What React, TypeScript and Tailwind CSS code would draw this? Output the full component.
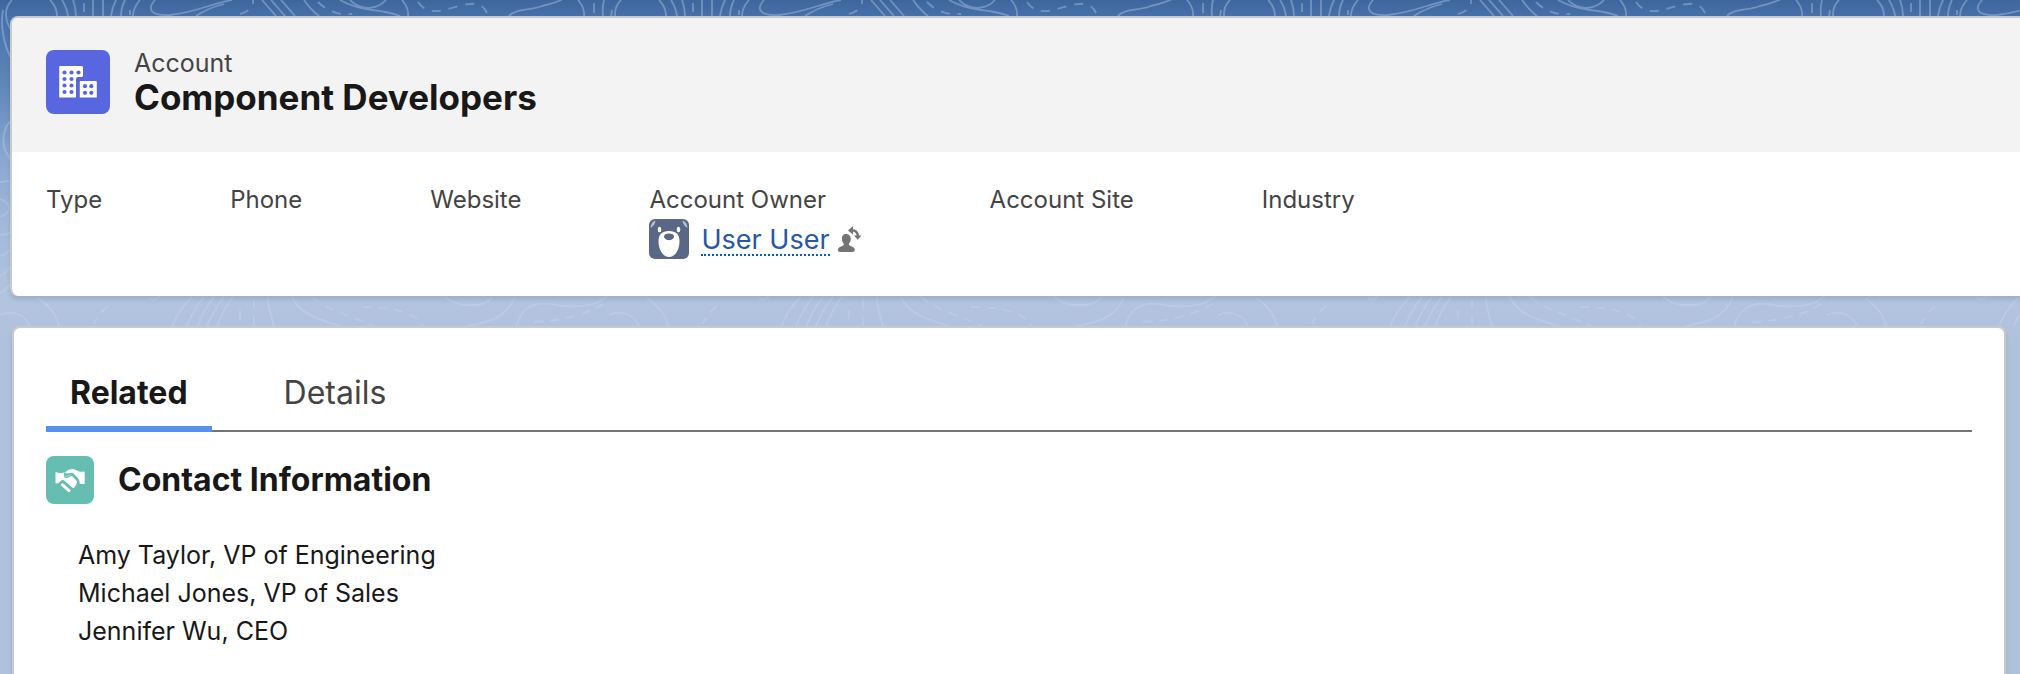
import React from "react";

function Contours() {
  return (
    <svg aria-hidden="true" className="absolute inset-x-0 top-0 -z-10 h-[340px] w-full">
      <defs>
        <pattern id="topo" width="609" height="340" patternUnits="userSpaceOnUse">
          <g fill="none" stroke="#b8cfee" strokeOpacity="0.4" strokeWidth="1.800">
            <path d="M12 0C2 10 6 24 13 32M3 10C0 26 4 46 12 60M50 0c5 5 7 11 7 16M62 0q5 8 6 16M73 0q3 8 3 16M93 0v16M103 0v16M116 0q-4 8-5 16M125 0q-4 8-4 16M140 0q-7 8-7 16" />
            <path d="M84 3v10M130 10v5" strokeDasharray="9 6" />
            <path d="M155 0C146 10 152 16 170 15C198 12 212 3 232 0M196 16q12-8 28-12M262 0l14 16M271 0l14 16M281 0l14 16M304 0q8 11 15 16M350 0C362 12 378 9 386 0M340 0q14 8 32 10t28 6M402 0q7 8 6 16" />
            <path d="M240 14q14-4 13-14M318 2q14 14 34 12M418 2C430 20 450 6 470 4Q484 2 488 16" strokeDasharray="9 8" />
            <path d="M509 16C516 8 530 11 542 6C552 4 558 1 562 0M578 0q7 8 6 16M604 0q-2 8-1 16" />
            <path d="M594 3v10" />
            <path d="M12 120C3 126 2 142 5 150T12 162M0 182q9-2 12 1M0 199C10 202 14 212 0 217M0 235q8 0 12-4M0 256q8-2 12-9M0 276q8-4 12-12" />
          </g>
          <g fill="none" stroke="#d3dff3" strokeOpacity="0.28" strokeWidth="1.800">
            <path d="M0 293q8-4 12-12M0 315C10 310 28 312 32 333M38 298c12 8 20 18 22 32M150 298q5 4 10-2" />
            <path d="M192 297q-14 13-20 30M204 297q-10 12-17 29M214 297q-10 12-17 30M224 297q-10 12-18 31M233 297q-10 12-17 33M268 297q0 12 8 34M292 297C304 322 335 320 356 334M445 297C462 310 487 306 492 297M515 297C503 327 472 322 450 331M516 328C522 300 545 302 561 306C590 308 600 302 607 296" />
            <path d="M108 306q-10 8-14 18M312 297C330 312 352 314 388 334M362 307q54 0 62 22M240 310v20M254 300v30M534 322q48-2 75-22" strokeDasharray="9 7" />
          </g>
        </pattern>
      </defs>
      <rect width="100%" height="340" fill="url(#topo)" />
    </svg>
  );
}

function AccountIcon() {
  return (
    <svg viewBox="0 0 64 64" aria-hidden="true" className="size-16 shrink-0 rounded-lg bg-[#5867e0]">
      <path
        fill="#fff"
        d="M14 16h21.500a1.500 1.500 0 0 1 1.500 1.500v8a1.500 1.500 0 0 1-1.500 1.500H32a2 2 0 0 0-2 2v18.500H13.200V17q0-1 .8-1zM34.800 31h15q1 0 1 1v15.500h-17V32q0-1 1-1z"
      />
      <g fill="#5867e0">
        {[18.5, 25.5, 32.5].map((x) => (
          <circle key={x} cx={x} cy="22.500" r="2.100" />
        ))}
        {[29, 35.5, 42].map((y) => (
          <g key={y}>
            <circle cx="18.500" cy={y} r="2.100" />
            <circle cx="25.500" cy={y} r="2.100" />
          </g>
        ))}
        {[36.2, 42.8].map((y) => (
          <g key={y}>
            <circle cx="39" cy={y} r="2.100" />
            <circle cx="45.300" cy={y} r="2.100" />
          </g>
        ))}
      </g>
    </svg>
  );
}

function HandshakeIcon() {
  return (
    <svg viewBox="0 0 48 48" aria-hidden="true" className="size-12 shrink-0 rounded-lg bg-[#66beb2]">
      <g fill="#fff">
        <path d="M9.500 17q0-1.200 1.200-.8c2.500 1.100 4.500 1.200 7 .4L19 16.200c-2.500 2.200-.5 5 2.200 3.800l2.600-1.300q1.200-.4 2.200.6l4.600 5q1.200 1.500 0 3-1.200 4.500-3.600 5l-8.200-7.300c-1.600-1.400-3.300-1.200-4.600.6-1.200 1.600-2.500 2-3.900 2-.6 0-.8-.3-.8-.8z" />
        <path d="M20 17.500c-1-.6-.6-1.600.4-2.300 3-2 6-2.700 9-1.500 2.600 1.600 5 2.600 8.100 1.900q1.200-.2 1.200.9v10.700q0 .9-1 .8c-2.300 0-3.800 0-4.200-.8.5-2.500-.8-4.500-2.500-6l-3.500-3.600q-1.600-1.200-3.500-.5z" />
      </g>
      <path d="M18.500 20.800q1.500 1 3.500 0l3-1.500q1-.3 2 .7l4.500 4.800q1.500 1.700.8 3.700" fill="none" stroke="#66beb2" strokeWidth="1.300" strokeLinecap="round" />
      <path d="M16.500 28.800l6.500 5.800" fill="none" stroke="#66beb2" strokeWidth="5.400" strokeLinecap="round" />
      <path d="M16.500 28.800l6.500 5.800" fill="none" stroke="#fff" strokeWidth="3" strokeLinecap="round" />
    </svg>
  );
}

function BearAvatar() {
  return (
    <svg viewBox="0 0 40 40" aria-hidden="true" className="size-10 shrink-0 rounded-md bg-[#5a6786]">
      <path d="M1.500 9Q2 3 6.500 1.500 6 6 1.500 9zM38.500 9Q38 3 33.500 1.500 34 6 38.500 9z" fill="#b9c2d6" />
      <ellipse cx="10.500" cy="10.500" rx="1.800" ry="2.800" fill="#fff" />
      <ellipse cx="29.500" cy="10.500" rx="1.800" ry="2.800" fill="#fff" />
      <path d="M20 12c7 0 10.500 3.500 10.500 10C30.500 31 26 38 20 38S9.500 31 9.500 22c0-6.500 3.500-10 10.500-10z" fill="#fff" />
      <path d="M20 14.500c3 0 5 1.200 5 3 0 2-2.500 3.700-5 3.700s-5-1.700-5-3.700c0-1.800 2-3 5-3z" fill="#5a6786" />
    </svg>
  );
}

function ChangeOwnerIcon() {
  return (
    <svg viewBox="0 0 26 28" aria-hidden="true" className="h-7 w-[26px]">
      <path
        fill="#747474"
        d="M10 9c3 0 4.800 2.200 4.800 5 0 1.800-.7 3.400-1.700 4.400-.5.700-.3 1.600.5 2 3 1.200 5.200 2.200 5.200 4.400 0 1.500-.8 2.200-2.200 2.200H4.100c-1.400 0-2.200-.7-2.200-2.200 0-2.200 2.200-3.200 5.200-4.400.8-.4 1-1.300.5-2-1-1-1.700-2.600-1.700-4.400C5.900 11.200 7 9 10 9z"
      />
      <path d="M14.500 5.500c4.500-.7 7.300 1.500 7.500 6" fill="none" stroke="#747474" strokeWidth="2.400" />
      <path d="M12 5.500L17 1v8.500zM18 10.500h7.500l-3.700 4.300z" fill="#747474" />
    </svg>
  );
}

function Field({ label, children }: { label: string; children?: React.ReactNode }) {
  return (
    <div>
      <dt className="text-[24px] leading-9 text-[#444]">{label}</dt>
      <dd className="pt-px">{children}</dd>
    </div>
  );
}

const contacts = ["Amy Taylor, VP of Engineering", "Michael Jones, VP of Sales", "Jennifer Wu, CEO"];

export default function App() {
  return (
    <div className="relative isolate flex min-h-screen flex-col overflow-x-hidden bg-[#b0c1de] bg-[linear-gradient(180deg,#3d679c_0px,#4872ab_20px,#5f87b8_85px,#88a6d0_155px,#a4badb_230px,#b3c4df_300px,#b0c1de_340px)] bg-no-repeat pt-4 font-['Inter','Liberation_Sans',sans-serif] text-[#181818]">
      <Contours />
      <header className="-mr-3 ml-[10px] overflow-hidden rounded-lg border-2 border-b-0 border-[#c9c9c9] bg-white shadow-[0_4px_4px_rgba(0,0,0,0.1)]">
        <div className="flex items-start gap-6 bg-[#f3f3f3] px-[34px] pt-8 pb-[34px]">
          <AccountIcon />
          <div>
            <p className="text-[25px] leading-[26px] text-[#444]">Account</p>
            <h1 className="text-[35px] leading-[42px] font-bold">Component Developers</h1>
          </div>
        </div>
        <dl className="flex h-36 gap-32 px-[34px] pt-[30px]">
          <Field label="Type" />
          <Field label="Phone" />
          <Field label="Website" />
          <Field label="Account Owner">
            <div className="flex items-center">
              <BearAvatar />
              <a href="#owner" className="mt-1 ml-3 border-b-2 border-dotted border-[#0b5cab] text-[27px] leading-7 text-[#2858a8]">
                User User
              </a>
              <button type="button" aria-label="Change owner" className="ml-1.5">
                <ChangeOwnerIcon />
              </button>
            </div>
          </Field>
          <Field label="Account Site" />
          <Field label="Industry" />
        </dl>
      </header>

      <main className="mt-[30px] mr-[14px] ml-3 flex-1 rounded-t-lg border-2 border-b-0 border-[#c9c9c9] bg-white px-8 pt-8 shadow-[0_4px_4px_rgba(0,0,0,0.1)]">
        <div role="tablist" className="flex gap-12 border-b-2 border-[#747474]">
          <button type="button" role="tab" aria-selected="true" className="-mb-0.5 h-[72px] border-b-6 border-[#5890f2] px-6 text-[32px] leading-10 font-bold">
            Related
          </button>
          <button type="button" role="tab" aria-selected="false" className="-mb-0.5 h-[72px] border-b-6 border-transparent px-6 text-[32px] leading-10 text-[#444]">
            Details
          </button>
        </div>
        <section className="pt-6">
          <div className="flex items-center gap-6">
            <HandshakeIcon />
            <h2 className="text-[32px] leading-10 font-bold">Contact Information</h2>
          </div>
          <ul className="mt-8 px-8 text-[25px] leading-[38px]">
            {contacts.map((c) => (
              <li key={c}>{c}</li>
            ))}
          </ul>
        </section>
      </main>
    </div>
  );
}
